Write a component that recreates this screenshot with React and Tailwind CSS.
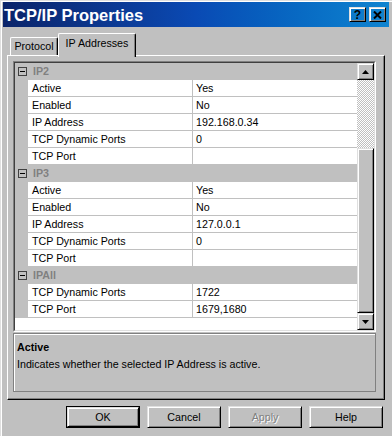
const groups = [
  {
    name: "IP2",
    rows: [
      ["Active", "Yes"],
      ["Enabled", "No"],
      ["IP Address", "192.168.0.34"],
      ["TCP Dynamic Ports", "0"],
      ["TCP Port", ""],
    ],
  },
  {
    name: "IP3",
    rows: [
      ["Active", "Yes"],
      ["Enabled", "No"],
      ["IP Address", "127.0.0.1"],
      ["TCP Dynamic Ports", "0"],
      ["TCP Port", ""],
    ],
  },
  {
    name: "IPAll",
    rows: [
      ["TCP Dynamic Ports", "1722"],
      ["TCP Port", "1679,1680"],
    ],
  },
];

// classic 3d bevel
const raised =
  "border border-t-[#dfdfdf] border-l-[#dfdfdf] border-r-black border-b-black shadow-[inset_1px_1px_#fff,inset_-1px_-1px_#808080]";

const Arrow = ({ down }) => (
  <svg width="7" height="4" viewBox="0 0 7 4">
    <polygon points={down ? "0,0 7,0 3.5,4" : "3.5,0 7,4 0,4"} fill="#000" />
  </svg>
);

const Button = ({ children, isDefault, disabled }) => {
  const label = (
    <span
      className={
        disabled
          ? "text-[#808080] [text-shadow:1px_1px_0_#fff]"
          : "text-black"
      }
    >
      {children}
    </span>
  );
  if (isDefault) {
    return (
      <div className="w-[74px] h-[22px] border border-black flex">
        <div className={`flex-1 flex items-center justify-center ${raised}`}>
          {label}
        </div>
      </div>
    );
  }
  return (
    <div
      className={`w-[74px] h-[22px] flex items-center justify-center ${raised}`}
    >
      {label}
    </div>
  );
};

const CategoryRow = ({ name }) => (
  <div className="h-[17px] flex items-center bg-[#c0c0c0]">
    <div className="w-[13px] flex justify-center pl-px">
      <div className="w-[9px] h-[9px] border border-[#404040] flex items-center justify-center">
        <div className="w-[5px] h-px bg-black" />
      </div>
    </div>
    <div className="pl-[5px] font-bold text-[#808080]">{name}</div>
  </div>
);

const PropRow = ({ label, value }) => (
  <div className="h-[17px] flex">
    <div className="w-[13px] bg-[#c0c0c0]" />
    <div className="w-[165px] pl-[4px] flex items-center border-r border-b border-[#c0c0c0] bg-white">
      {label}
    </div>
    <div className="flex-1 pl-[3px] flex items-center border-b border-[#c0c0c0] bg-white">
      {value}
    </div>
  </div>
);

export default function App() {
  return (
    <div className="w-[392px] h-[436px] overflow-hidden bg-[#c0c0c0] pt-[2px] px-[3px] text-[10.7px] leading-[13px] text-black font-['Liberation_Sans',Arial,sans-serif] shadow-[inset_1px_1px_#dfdfdf,inset_2px_2px_#fff]">
      {/* title bar */}
      <div className="h-[25px] flex items-center justify-between bg-gradient-to-r from-[#0a246a] via-[#0a4ab4] to-[#1084d0] pl-[1px] pr-[3px]">
        <div className="text-white font-bold text-[16.5px] leading-[20px] pt-px">
          TCP/IP Properties
        </div>
        <div className="flex gap-[3px]">
          <div className={`w-[17px] h-[15px] flex items-center justify-center font-bold text-[12px] leading-none ${raised}`}>
            ?
          </div>
          <div className={`w-[17px] h-[15px] flex items-center justify-center ${raised}`}>
            <svg width="9" height="8" viewBox="0 0 9 8">
              <path d="M1 0.5 L8 7.5 M8 0.5 L1 7.5" stroke="#000" strokeWidth="2" />
            </svg>
          </div>
        </div>
      </div>

      {/* tabs */}
      <div className="mt-[6px] ml-[7px] h-[22px] flex items-end">
        <div className="w-[48px] h-[18px] flex items-center justify-center border-t border-l border-r border-t-white border-l-white border-r-black rounded-t-[2px] shadow-[inset_-1px_0_#808080]">
          Protocol
        </div>
        <div className="relative z-10 w-[78px] h-[24px] -mb-[2px] pb-[4px] flex items-center justify-center bg-[#c0c0c0] border-t border-l border-r border-t-white border-l-white border-r-black rounded-t-[2px] shadow-[inset_-1px_0_#808080]">
          IP Addresses
        </div>
      </div>

      {/* panel */}
      <div className="ml-[4px] w-[378px] h-[345px] pt-[5px] pl-[5px] border border-t-white border-l-white border-r-black border-b-black shadow-[inset_-1px_-1px_#808080]">
        {/* property grid */}
        <div className="w-[363px] h-[271px] border border-t-[#808080] border-l-[#808080] border-r-white border-b-white flex">
          <div className="flex-1 flex border border-t-[#404040] border-l-[#404040] border-r-[#dfdfdf] border-b-[#dfdfdf]">
            <div className="flex-1 bg-white">
              {groups.map((g) => (
                <div key={g.name}>
                  <CategoryRow name={g.name} />
                  {g.rows.map(([label, value]) => (
                    <PropRow key={g.name + label} label={label} value={value} />
                  ))}
                </div>
              ))}
            </div>
            {/* scrollbar */}
            <div className="w-[17px] flex flex-col">
              <div className={`h-[17px] flex items-center justify-center ${raised}`}>
                <Arrow />
              </div>
              <div className="h-[68px] bg-[repeating-conic-gradient(#fff_0_25%,#c0c0c0_0_50%)] bg-[length:2px_2px]" />
              <div className={`flex-1 ${raised}`} />
              <div className={`h-[17px] flex items-center justify-center ${raised}`}>
                <Arrow down />
              </div>
            </div>
          </div>
        </div>

        {/* description */}
        <div className="mt-px w-[363px] h-[59px] pt-[7px] pl-[3px] border border-[#808080] shadow-[inset_1px_1px_#fff]">
          <div className="font-bold">Active</div>
          <div className="mt-[4px]">Indicates whether the selected IP Address is active.</div>
        </div>
      </div>

      {/* buttons */}
      <div className="mt-[6px] pr-[6px] flex justify-end gap-[7px]">
        <Button isDefault>OK</Button>
        <Button>Cancel</Button>
        <Button disabled>Apply</Button>
        <Button>Help</Button>
      </div>
    </div>
  );
}
